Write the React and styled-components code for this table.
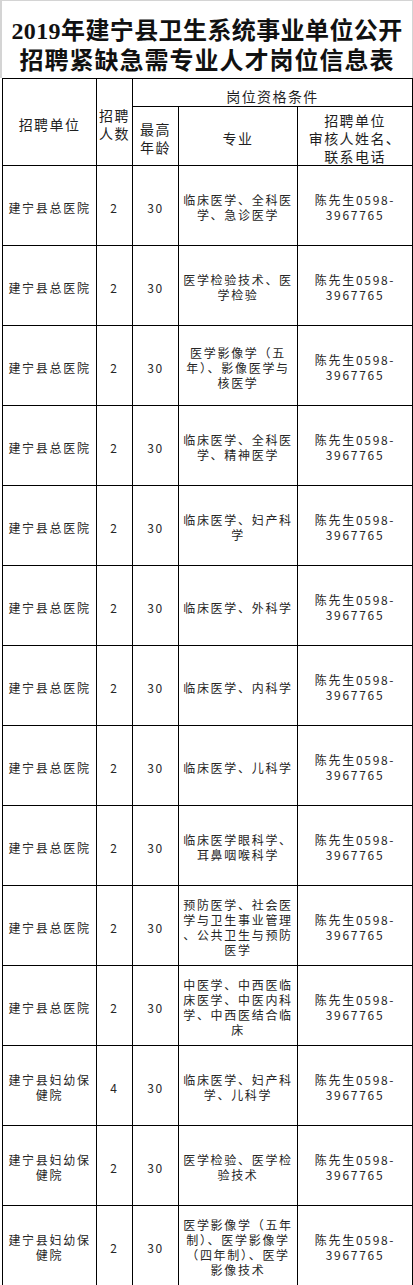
import styled, { createGlobalStyle } from 'styled-components';

const GlobalStyle = createGlobalStyle`
	html, body {
		margin: 0;
		padding: 0;
		background: #ffffff;
	}
`;

const Page = styled.div`
	width: 413px;
	background: #ffffff;
	font-family: 'Noto Sans CJK SC', 'Noto Sans', sans-serif;
	color: #1a1a1a;
`;

const TitleBox = styled.div`
	box-sizing: border-box;
	height: 78px;
	padding-top: 15px;
	border: 1px solid #d4d4d4;
	border-left-width: 2px;
	border-bottom: none;
	text-align: center;
`;

const TitleLine = styled.div`
	font-family: 'Liberation Serif', 'Noto Sans CJK SC', serif;
	font-size: 24px;
	font-weight: 700;
	line-height: 30px;
	letter-spacing: ${(props) => props.$spacing || '0.4px'};
	color: #111111;
	white-space: nowrap;
`;

const Table = styled.table`
	border-collapse: collapse;
	table-layout: fixed;
	width: 410px;
	margin-left: 2px;
`;

const HeadCell = styled.th`
	border: 1px solid #000000;
	padding: ${(props) => props.$top || 4}px 0 0;
	font-size: 14px;
	font-weight: 400;
	line-height: 18px;
	letter-spacing: 1.4px;
	text-align: center;
	vertical-align: middle;
	color: #1f1f1f;
`;

const Row = styled.tr`
	height: ${(props) => props.$height}px;
`;

const Cell = styled.td`
	border: 1px solid #000000;
	padding: 3px 0 0;
	font-size: 12px;
	line-height: 15px;
	letter-spacing: 1.7px;
	text-align: center;
	vertical-align: middle;
	color: #262626;
`;

const Line = styled.span`
	display: block;
	white-space: nowrap;
`;

const rows = [
	{ unit: ['建宁县总医院'], count: 2, major: ['临床医学、全科医', '学、急诊医学'] },
	{ unit: ['建宁县总医院'], count: 2, major: ['医学检验技术、医', '学检验'] },
	{ unit: ['建宁县总医院'], count: 2, major: ['医学影像学（五', '年）、影像医学与', '核医学'] },
	{ unit: ['建宁县总医院'], count: 2, major: ['临床医学、全科医', '学、精神医学'] },
	{ unit: ['建宁县总医院'], count: 2, major: ['临床医学、妇产科', '学'] },
	{ unit: ['建宁县总医院'], count: 2, major: ['临床医学、外科学'] },
	{ unit: ['建宁县总医院'], count: 2, major: ['临床医学、内科学'] },
	{ unit: ['建宁县总医院'], count: 2, major: ['临床医学、儿科学'] },
	{ unit: ['建宁县总医院'], count: 2, major: ['临床医学眼科学、', '耳鼻咽喉科学'] },
	{
		unit: ['建宁县总医院'],
		count: 2,
		major: ['预防医学、社会医', '学与卫生事业管理', '、公共卫生与预防', '医学'],
	},
	{
		unit: ['建宁县总医院'],
		count: 2,
		major: ['中医学、中西医临', '床医学、中医内科', '学、中西医结合临', '床'],
	},
	{ unit: ['建宁县妇幼保', '健院'], count: 4, major: ['临床医学、妇产科', '学、儿科学'] },
	{ unit: ['建宁县妇幼保', '健院'], count: 2, major: ['医学检验、医学检', '验技术'] },
	{
		unit: ['建宁县妇幼保', '健院'],
		count: 2,
		major: ['医学影像学（五年', '制）、医学影像学', '（四年制）、医学', '影像技术'],
	},
];

const contact = ['陈先生0598-', '3967765'];

function Lines({ items }) {
	return items.map((text, i) => <Line key={i}>{text}</Line>);
}

function App() {
	return (
		<Page>
			<GlobalStyle />
			<TitleBox>
				<TitleLine>2019年建宁县卫生系统事业单位公开</TitleLine>
				<TitleLine $spacing='1px'>招聘紧缺急需专业人才岗位信息表</TitleLine>
			</TitleBox>
			<Table>
				<colgroup>
					<col style={{ width: 94 }} />
					<col style={{ width: 36 }} />
					<col style={{ width: 46 }} />
					<col style={{ width: 119 }} />
					<col style={{ width: 115 }} />
				</colgroup>
				<thead>
					<Row $height={28}>
						<HeadCell rowSpan={2}>招聘单位</HeadCell>
						<HeadCell rowSpan={2}>
							<Lines items={['招聘', '人数']} />
						</HeadCell>
						<HeadCell colSpan={3} $top={7}>
							岗位资格条件
						</HeadCell>
					</Row>
					<Row $height={58}>
						<HeadCell>
							<Lines items={['最高', '年龄']} />
						</HeadCell>
						<HeadCell>专业</HeadCell>
						<HeadCell>
							<Lines items={['招聘单位', '审核人姓名、', '联系电话']} />
						</HeadCell>
					</Row>
				</thead>
				<tbody>
					{rows.map((row, i) => (
						<Row key={i} $height={80}>
							<Cell>
								<Lines items={row.unit} />
							</Cell>
							<Cell>{row.count}</Cell>
							<Cell>30</Cell>
							<Cell>
								<Lines items={row.major} />
							</Cell>
							<Cell>
								<Lines items={contact} />
							</Cell>
						</Row>
					))}
				</tbody>
			</Table>
		</Page>
	);
}

export default App;
